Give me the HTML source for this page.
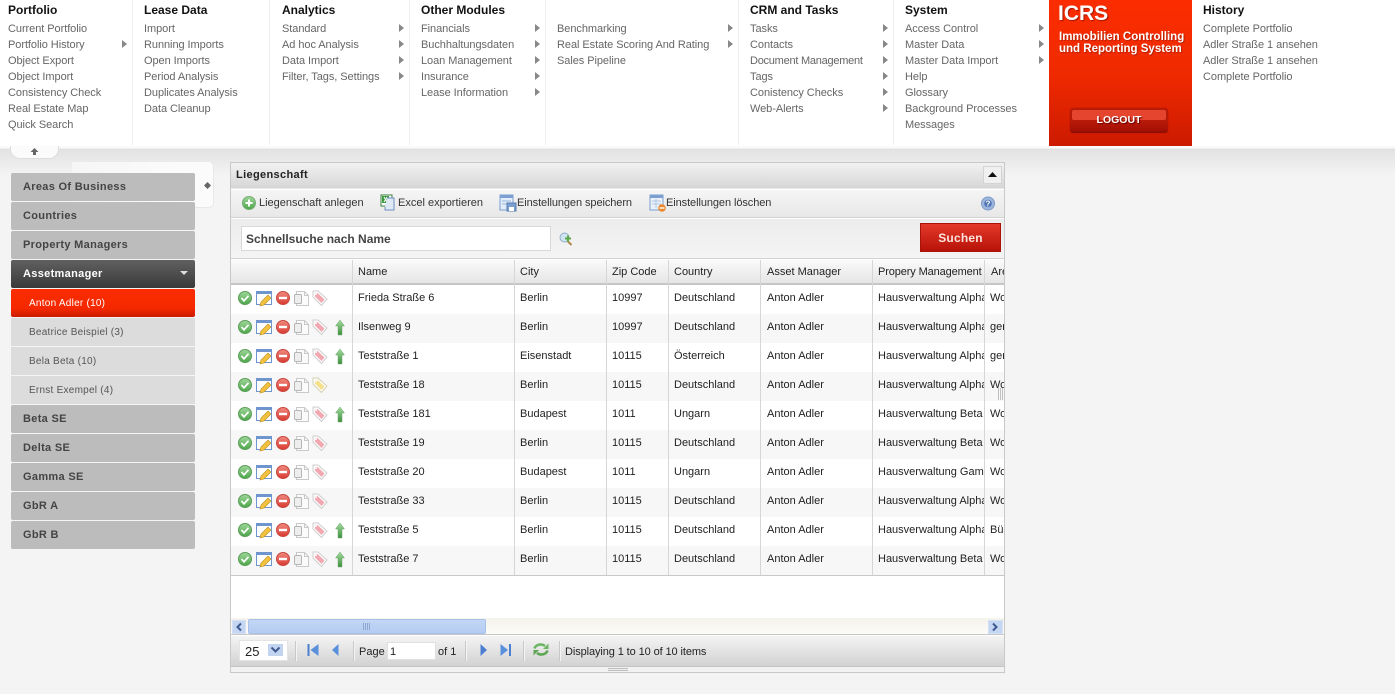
<!DOCTYPE html>
<html><head><meta charset="utf-8"><title>ICRS</title>
<style>
html,body{margin:0;padding:0;width:1395px;height:694px;overflow:hidden;background:#f4f4f4;font-family:"Liberation Sans",Arial,sans-serif;font-size:11px;color:#222}
div,span{box-sizing:border-box}
.a{position:absolute}
.t{position:absolute;white-space:nowrap;line-height:16px;margin-top:1px}
#menu{position:absolute;left:0;top:0;width:1395px;height:146px;background:#fff}
.v{position:absolute;top:0;width:1px;height:145px;background:#eee}
.h{position:absolute;top:2px;font-weight:bold;font-size:12px;line-height:16px;color:#111;white-space:nowrap}
.m{position:absolute;font-size:11px;line-height:16px;color:#666;white-space:nowrap;margin-top:1px;letter-spacing:-.06px}
.ar{position:absolute;width:0;height:0;border-left:5px solid #888;border-top:4px solid transparent;border-bottom:4px solid transparent}
.n{position:absolute;left:11px;width:184px;height:28px;border-radius:2px;font-weight:bold;font-size:11px;letter-spacing:.32px;line-height:28px;padding-left:12px;color:#444;background:#bcbcbc}
.n.s{font-weight:normal;font-size:10px;letter-spacing:.25px;padding-left:18px;background:#dcdcdc;color:#555;line-height:30px;border-radius:0}
table{border-collapse:separate;border-spacing:0;table-layout:fixed;position:absolute;left:231px;width:773px}
td{box-sizing:border-box;height:29px;padding:5px 0 0 5px;font-weight:normal;text-align:left;overflow:hidden;white-space:nowrap;vertical-align:top;border-right:1px solid #d6d6d6;font-size:11px;line-height:16px;color:#222}
td:nth-child(6){padding-left:6px}
tr.e td{background:#f7f7f7}
tr.o td{background:#fff}
td:last-child{border-right:0}
.sep{position:absolute;width:1px;background:#c8c8c8;box-shadow:1px 0 0 #f4f4f4}
</style></head><body>
<svg width="0" height="0" style="position:absolute"><defs>
<linearGradient id="gg" x1="0" y1="0" x2="0" y2="1"><stop offset="0" stop-color="#9fd69a"/><stop offset="1" stop-color="#4ca64a"/></linearGradient>
<linearGradient id="rg" x1="0" y1="0" x2="0" y2="1"><stop offset="0" stop-color="#f08a80"/><stop offset="1" stop-color="#d83a30"/></linearGradient>
<linearGradient id="ug" x1="0" y1="0" x2="0" y2="1"><stop offset="0" stop-color="#a5dca0"/><stop offset="1" stop-color="#3d8f3d"/></linearGradient>
<g id="base">
<circle cx="245" cy="298" r="6.5" fill="url(#gg)" stroke="#5a9e58"/>
<path d="M241.5 298l2.5 2.8 4.5-5" fill="none" stroke="#fff" stroke-width="1.7"/>
<rect x="256.5" y="291.5" width="15" height="13" fill="#fff" stroke="#6f95cf"/>
<rect x="256" y="291" width="16" height="3" fill="#6f95cf"/>
<path d="M260 306l1-4 7-7 3 3-7 7z" fill="#f2c23e" stroke="#b98a1e" stroke-width=".6"/>
<circle cx="283" cy="298" r="6.5" fill="url(#rg)" stroke="#c9473e"/>
<rect x="279" y="296.8" width="8" height="2.4" fill="#fff"/>
<path d="M296.5 291.5h8l4 4v10h-12z" fill="#fbfbfb" stroke="#c9c9c9"/>
<rect x="294.5" y="294.5" width="7" height="9" rx="1" fill="#eee" stroke="#b5b5b5"/>
<path d="M304.500 291.500v4h4" fill="none" stroke="#c9c9c9"/>
</g>
<g id="tp"><path d="M313 291h5l9 8-5.500 6.500-8.500-8.500z" fill="#fbfbfb" stroke="#cfcfcf"/><path d="M315 293h2.500l7 6.500-3 3.500-6.500-6.500z" fill="#f2a8b0"/><circle cx="316" cy="294" r="1" fill="#fff"/></g>
<g id="ty"><path d="M313 291h5l9 8-5.500 6.500-8.500-8.500z" fill="#fbfbfb" stroke="#d6d0b0"/><path d="M315 293h2.500l7 6.500-3 3.500-6.500-6.500z" fill="#f5e08a"/><circle cx="316" cy="294" r="1" fill="#fff"/></g>
<path id="up" d="M340 291l4.500 6h-2.500v9h-4v-9h-2.500z" fill="url(#ug)" stroke="#6aa86a" stroke-width=".5"/>
</defs></svg>

<div class="a" style="left:0;top:146px;width:1395px;height:32px;background:linear-gradient(#fafafa 0,#fafafa 2px,#e2e2e2 3px,#f4f4f4 30px)"></div>

<div id="menu">
<div class="v" style="left:132px"></div><div class="v" style="left:269px"></div><div class="v" style="left:409px"></div><div class="v" style="left:545px"></div><div class="v" style="left:738px"></div><div class="v" style="left:893px"></div>
<div class="h" style="left:8px">Portfolio</div>
<div class="m" style="left:8px;top:20px">Current Portfolio</div>
<div class="m" style="left:8px;top:36px">Portfolio History</div><div class="ar" style="left:122px;top:40px"></div>
<div class="m" style="left:8px;top:52px">Object Export</div>
<div class="m" style="left:8px;top:68px">Object Import</div>
<div class="m" style="left:8px;top:84px">Consistency Check</div>
<div class="m" style="left:8px;top:100px">Real Estate Map</div>
<div class="m" style="left:8px;top:116px">Quick Search</div>
<div class="h" style="left:144px">Lease Data</div>
<div class="m" style="left:144px;top:20px">Import</div>
<div class="m" style="left:144px;top:36px">Running Imports</div>
<div class="m" style="left:144px;top:52px">Open Imports</div>
<div class="m" style="left:144px;top:68px">Period Analysis</div>
<div class="m" style="left:144px;top:84px">Duplicates Analysis</div>
<div class="m" style="left:144px;top:100px">Data Cleanup</div>
<div class="h" style="left:282px">Analytics</div>
<div class="m" style="left:282px;top:20px">Standard</div><div class="ar" style="left:399px;top:24px"></div>
<div class="m" style="left:282px;top:36px">Ad hoc Analysis</div><div class="ar" style="left:399px;top:40px"></div>
<div class="m" style="left:282px;top:52px">Data Import</div><div class="ar" style="left:399px;top:56px"></div>
<div class="m" style="left:282px;top:68px">Filter, Tags, Settings</div><div class="ar" style="left:399px;top:72px"></div>
<div class="h" style="left:421px">Other Modules</div>
<div class="m" style="left:421px;top:20px">Financials</div><div class="ar" style="left:535px;top:24px"></div>
<div class="m" style="left:421px;top:36px">Buchhaltungsdaten</div><div class="ar" style="left:535px;top:40px"></div>
<div class="m" style="left:421px;top:52px">Loan Management</div><div class="ar" style="left:535px;top:56px"></div>
<div class="m" style="left:421px;top:68px">Insurance</div><div class="ar" style="left:535px;top:72px"></div>
<div class="m" style="left:421px;top:84px">Lease Information</div><div class="ar" style="left:535px;top:88px"></div>
<div class="m" style="left:557px;top:20px">Benchmarking</div><div class="ar" style="left:728px;top:24px"></div>
<div class="m" style="left:557px;top:36px">Real Estate Scoring And Rating</div><div class="ar" style="left:728px;top:40px"></div>
<div class="m" style="left:557px;top:52px">Sales Pipeline</div>
<div class="h" style="left:750px">CRM and Tasks</div>
<div class="m" style="left:750px;top:20px">Tasks</div><div class="ar" style="left:883px;top:24px"></div>
<div class="m" style="left:750px;top:36px">Contacts</div><div class="ar" style="left:883px;top:40px"></div>
<div class="m" style="left:750px;top:52px;letter-spacing:-.25px">Document Management</div><div class="ar" style="left:883px;top:56px"></div>
<div class="m" style="left:750px;top:68px">Tags</div><div class="ar" style="left:883px;top:72px"></div>
<div class="m" style="left:750px;top:84px">Conistency Checks</div><div class="ar" style="left:883px;top:88px"></div>
<div class="m" style="left:750px;top:100px">Web-Alerts</div><div class="ar" style="left:883px;top:104px"></div>
<div class="h" style="left:905px">System</div>
<div class="m" style="left:905px;top:20px">Access Control</div><div class="ar" style="left:1039px;top:24px"></div>
<div class="m" style="left:905px;top:36px">Master Data</div><div class="ar" style="left:1039px;top:40px"></div>
<div class="m" style="left:905px;top:52px">Master Data Import</div><div class="ar" style="left:1039px;top:56px"></div>
<div class="m" style="left:905px;top:68px">Help</div>
<div class="m" style="left:905px;top:84px">Glossary</div>
<div class="m" style="left:905px;top:100px">Background Processes</div>
<div class="m" style="left:905px;top:116px">Messages</div>
<div class="h" style="left:1203px">History</div>
<div class="m" style="left:1203px;top:20px">Complete Portfolio</div>
<div class="m" style="left:1203px;top:36px">Adler Straße 1 ansehen</div>
<div class="m" style="left:1203px;top:52px">Adler Straße 1 ansehen</div>
<div class="m" style="left:1203px;top:68px">Complete Portfolio</div>
<div class="a" style="left:1049px;top:0;width:143px;height:146px;background:linear-gradient(#fb2d00 0,#f02a00 50%,#cc1a00 100%)">
<div class="t" style="left:9px;top:1px;font-weight:bold;font-size:21px;line-height:24px;color:#fff;text-shadow:1px 1px 1px #a01800">ICRS</div>
<div class="t" style="left:10px;top:30px;font-weight:bold;font-size:11.5px;line-height:12px;color:#fff;text-shadow:1px 1px 1px #b02000">Immobilien Controlling<br>und Reporting System</div>
<div class="a" style="left:21px;top:108px;width:98px;height:25px;border-radius:3px;background:linear-gradient(#b81a08,#b81a08 50%,#a81206 85%,#8c0e04);box-shadow:0 0 1px #a01000"></div>
<div class="a" style="left:23px;top:110px;width:94px;height:10px;border-radius:2px;background:#e5452f"></div>
<div class="t" style="left:21px;top:111px;width:98px;text-align:center;font-weight:bold;font-size:10.5px;color:#fff;text-shadow:1px 1px 1px #600">LOGOUT</div>
</div>
</div>

<div class="a" style="left:10px;top:146px;width:49px;height:13px;background:#fbfbfb;border:1px solid #ddd;border-top:0;border-radius:0 0 10px 10px"></div>
<svg class="a" style="left:29px;top:147px" width="11" height="9"><path d="M5.500 1l4 4h-2.500v3h-3v-3h-2.500z" fill="#666"/></svg>

<div class="a" style="left:72px;top:162px;width:142px;height:46px;background:linear-gradient(90deg,#f6f6f6,#fbfbfb 80%);border-right:1px solid #e8e8e8;border-bottom:1px solid #e8e8e8;border-radius:0 5px 5px 0"></div>
<svg class="a" style="left:203px;top:181px" width="9" height="9"><path d="M4.500 1l3.500 3.500-3.500 3.500-3.500-3.500z" fill="#666"/></svg>

<div class="n" style="top:173px">Areas Of Business</div>
<div class="n" style="top:202px">Countries</div>
<div class="n" style="top:231px">Property Managers</div>
<div class="n" style="top:260px;color:#fff;background:linear-gradient(#606060,#3a3a3a)">Assetmanager</div>
<svg class="a" style="left:179px;top:270px" width="10" height="6"><path d="M1 1h8l-4 4z" fill="#ddd"/></svg>
<div class="n s" style="top:289px;background:linear-gradient(#fb2c00 0,#f52800 70%,#c81c00);color:#fff;border-radius:2px">Anton Adler (10)</div>
<div class="n s" style="top:318px">Beatrice Beispiel (3)</div>
<div class="n s" style="top:347px">Bela Beta (10)</div>
<div class="n s" style="top:376px">Ernst Exempel (4)</div>
<div class="n" style="top:405px">Beta SE</div>
<div class="n" style="top:434px">Delta SE</div>
<div class="n" style="top:463px">Gamma SE</div>
<div class="n" style="top:492px">GbR A</div>
<div class="n" style="top:521px">GbR B</div>

<!-- Panel -->
<div class="a" style="left:230px;top:162px;width:775px;height:511px;border:1px solid #c8c8c8;background:#fff"></div>
<div class="a" style="left:231px;top:163px;width:773px;height:26px;background:linear-gradient(#f2f2f2,#d6d6d6);border-bottom:1px solid #e8e8e8"></div>
<div class="t" style="left:236px;top:166px;font-weight:bold;font-size:11px;letter-spacing:.35px;color:#222">Liegenschaft</div>
<div class="a" style="left:983px;top:166px;width:19px;height:18px;background:#f0f0f0;border:1px solid #d4d4d4"></div>
<svg class="a" style="left:987px;top:171px" width="11" height="7"><path d="M1 6l4.500-5 4.500 5z" fill="#111"/></svg>

<div class="a" style="left:231px;top:190px;width:773px;height:28px;background:linear-gradient(#f5f5f5,#e8e8e8);border-bottom:1px solid #d2d2d2"></div>
<svg class="a" style="left:231px;top:190px" width="773" height="28">
<circle cx="18" cy="13" r="6.500" fill="url(#gg)" stroke="#78ad76"/><path d="M14.500 13h7M18 9.500v7" stroke="#fff" stroke-width="2"/>
<rect x="150" y="5" width="11" height="11" fill="#fff" stroke="#39803c"/><rect x="151" y="6" width="7" height="7" fill="#3a9a3e"/><path d="M153 7l3 5M156 7l-3 5" stroke="#fff"/><path d="M156 8h7v12h-9v-3" fill="#dfe8f5" stroke="#6f8fc0"/>
<rect x="269" y="5" width="13" height="15" fill="#e3edf9" stroke="#7a9fd0"/><rect x="269" y="5" width="13" height="3" fill="#7a9fd0"/><path d="M271 11h9M271 14h5" stroke="#9ab5da"/><rect x="276" y="13" width="9" height="8" fill="#7a9fd0" stroke="#567cb0"/><rect x="278" y="17" width="5" height="4" fill="#fff"/>
<rect x="419" y="5" width="13" height="15" fill="#eaf1fa" stroke="#7a9fd0"/><rect x="419" y="5" width="13" height="3" fill="#7a9fd0"/><path d="M421 11h9M421 14h9M425 9v9" stroke="#b0c6e2"/><circle cx="431" cy="18" r="3.800" fill="#e8892e"/><rect x="428.500" y="17.300" width="5" height="1.400" fill="#fff"/>
<circle cx="757" cy="13.500" r="6.500" fill="#9db6dc" stroke="#7d9cc9"/><circle cx="757" cy="13.500" r="3.800" fill="#4f74b5"/><text x="757" y="16.500" font-size="8" font-weight="bold" fill="#fff" text-anchor="middle" font-family="Liberation Sans">?</text>
</svg>
<div class="t" style="left:259px;top:194px;color:#333">Liegenschaft anlegen</div>
<div class="t" style="left:398px;top:194px;color:#333">Excel exportieren</div>
<div class="t" style="left:517px;top:194px;color:#333;letter-spacing:-.08px">Einstellungen speichern</div>
<div class="t" style="left:666px;top:194px;color:#333;letter-spacing:-.08px">Einstellungen löschen</div>

<div class="a" style="left:231px;top:219px;width:773px;height:40px;background:linear-gradient(#ececec,#f4f4f4);border-bottom:1px solid #d2d2d2"></div>
<div class="a" style="left:241px;top:226px;width:310px;height:25px;background:#fff;border:1px solid #d8d8d8"></div>
<div class="t" style="left:246px;top:230px;font-weight:bold;font-size:12px;color:#444">Schnellsuche nach Name</div>
<svg class="a" style="left:558px;top:231px" width="16" height="16"><circle cx="6.500" cy="6.500" r="4.500" fill="#cfe3f2" stroke="#8fb0c8"/><path d="M9.500 10l4 4" stroke="#b08a50" stroke-width="2"/><path d="M7 7.500h6M10 4.500v6" stroke="#5aa84a" stroke-width="2"/></svg>
<div class="a" style="left:920px;top:223px;width:81px;height:29px;background:linear-gradient(#e2392a,#b81208);border:1px solid #a81408"></div>
<div class="t" style="left:920px;top:229px;width:81px;text-align:center;font-weight:bold;font-size:12px;letter-spacing:.2px;color:#fbe4de">Suchen</div>

<!-- Header -->
<div class="a" style="left:231px;top:260px;width:773px;height:25px;background:linear-gradient(#fafafa,#e6e6e6);border-bottom:2px solid #c6c6c6"></div>
<div class="a" style="left:352px;top:260px;width:1px;height:25px;background:#d6d6d6"></div>
<div class="a" style="left:514px;top:260px;width:1px;height:25px;background:#d6d6d6"></div>
<div class="a" style="left:606px;top:260px;width:1px;height:25px;background:#d6d6d6"></div>
<div class="a" style="left:668px;top:260px;width:1px;height:25px;background:#d6d6d6"></div>
<div class="a" style="left:760px;top:260px;width:1px;height:25px;background:#d6d6d6"></div>
<div class="a" style="left:872px;top:260px;width:1px;height:25px;background:#d6d6d6"></div>
<div class="a" style="left:984px;top:260px;width:1px;height:25px;background:#d6d6d6"></div>
<div class="t" style="left:358px;top:263px">Name</div>
<div class="t" style="left:520px;top:263px">City</div>
<div class="t" style="left:612px;top:263px">Zip Code</div>
<div class="t" style="left:674px;top:263px">Country</div>
<div class="t" style="left:767px;top:263px">Asset Manager</div>
<div class="t" style="left:878px;top:263px;letter-spacing:-.12px">Propery Management</div>
<div class="a" style="left:985px;top:260px;width:19px;height:23px;overflow:hidden"><div class="t" style="left:6px;top:3px">Area</div></div>

<table style="top:285px">
<colgroup><col style="width:122px"><col style="width:162px"><col style="width:92px"><col style="width:62px"><col style="width:92px"><col style="width:112px"><col style="width:112px"><col style="width:19px"></colgroup>
<tr class="o"><td></td><td>Frieda Straße 6</td><td>Berlin</td><td>10997</td><td>Deutschland</td><td>Anton Adler</td><td>Hausverwaltung Alpha</td><td>Wohnen</td></tr>
<tr class="e"><td></td><td>Ilsenweg 9</td><td>Berlin</td><td>10997</td><td>Deutschland</td><td>Anton Adler</td><td>Hausverwaltung Alpha</td><td>gemischt</td></tr>
<tr class="o"><td></td><td>Teststraße 1</td><td>Eisenstadt</td><td>10115</td><td>Österreich</td><td>Anton Adler</td><td>Hausverwaltung Alpha</td><td>gemischt</td></tr>
<tr class="e"><td></td><td>Teststraße 18</td><td>Berlin</td><td>10115</td><td>Deutschland</td><td>Anton Adler</td><td>Hausverwaltung Alpha</td><td>Wohnen</td></tr>
<tr class="o"><td></td><td>Teststraße 181</td><td>Budapest</td><td>1011</td><td>Ungarn</td><td>Anton Adler</td><td>Hausverwaltung Beta</td><td>Wohnen</td></tr>
<tr class="e"><td></td><td>Teststraße 19</td><td>Berlin</td><td>10115</td><td>Deutschland</td><td>Anton Adler</td><td>Hausverwaltung Beta</td><td>Wohnen</td></tr>
<tr class="o"><td></td><td>Teststraße 20</td><td>Budapest</td><td>1011</td><td>Ungarn</td><td>Anton Adler</td><td>Hausverwaltung Gamma</td><td>Wohnen</td></tr>
<tr class="e"><td></td><td>Teststraße 33</td><td>Berlin</td><td>10115</td><td>Deutschland</td><td>Anton Adler</td><td>Hausverwaltung Alpha</td><td>Wohnen</td></tr>
<tr class="o"><td></td><td>Teststraße 5</td><td>Berlin</td><td>10115</td><td>Deutschland</td><td>Anton Adler</td><td>Hausverwaltung Alpha</td><td>Büro</td></tr>
<tr class="e"><td></td><td>Teststraße 7</td><td>Berlin</td><td>10115</td><td>Deutschland</td><td>Anton Adler</td><td>Hausverwaltung Beta</td><td>Wohnen</td></tr>
</table>
<div class="a" style="left:231px;top:575px;width:773px;height:1px;background:#c8c8c8"></div>
<svg class="a" style="left:0;top:0;pointer-events:none" width="1395" height="694">
<use href="#base"/><use href="#tp"/>
<use href="#base" y="29"/><use href="#tp" y="29"/><use href="#up" y="29"/>
<use href="#base" y="58"/><use href="#tp" y="58"/><use href="#up" y="58"/>
<use href="#base" y="87"/><use href="#ty" y="87"/>
<use href="#base" y="116"/><use href="#tp" y="116"/><use href="#up" y="116"/>
<use href="#base" y="145"/><use href="#tp" y="145"/>
<use href="#base" y="174"/><use href="#tp" y="174"/>
<use href="#base" y="203"/><use href="#tp" y="203"/>
<use href="#base" y="232"/><use href="#tp" y="232"/><use href="#up" y="232"/>
<use href="#base" y="261"/><use href="#tp" y="261"/><use href="#up" y="261"/>
<path d="M998.500 388v12M1000.500 388v12M1002.500 388v12" stroke="#c0c0c0"/>
</svg>

<!-- Scrollbar -->
<div class="a" style="left:231px;top:618px;width:773px;height:17px;background:linear-gradient(#f5f2ec,#fcfbf7);border-bottom:1px solid #c6c6c6"></div>
<div class="a" style="left:232px;top:620px;width:14px;height:14px;background:#c5d6f3;border:1px solid #d4e0f5"></div>
<svg class="a" style="left:234px;top:622px" width="10" height="10"><path d="M7 1.500l-3.500 3.500 3.500 3.500" fill="none" stroke="#3e5a90" stroke-width="2"/></svg>
<div class="a" style="left:248px;top:619px;width:238px;height:15px;background:linear-gradient(#c3d6f5,#b4ccf2);border:1px solid #a9c1e8;border-radius:2px"></div>
<svg class="a" style="left:363px;top:623px" width="9" height="7"><path d="M.5 0v7M2.500 0v7M4.500 0v7M6.500 0v7" stroke="#8ea8d0"/></svg>
<div class="a" style="left:988px;top:620px;width:15px;height:14px;background:#c5d6f3;border:1px solid #d4e0f5"></div>
<svg class="a" style="left:990px;top:622px" width="10" height="10"><path d="M3 1.500l3.500 3.500-3.500 3.500" fill="none" stroke="#3e5a90" stroke-width="2"/></svg>

<!-- Paging -->
<div class="a" style="left:231px;top:636px;width:773px;height:31px;background:linear-gradient(#f4f4f4,#d2d2d2);border-bottom:1px solid #c4c4c4"></div>
<div class="a" style="left:231px;top:667px;width:773px;height:5px;background:#f2f2f2"></div>
<div class="a" style="left:608px;top:668px;width:20px;height:3px;border-top:1px solid #bbb;border-bottom:1px solid #bbb"></div>
<div class="a" style="left:239px;top:640px;width:49px;height:21px;background:#fff;border:1px solid #e4e4e4"></div>
<div class="t" style="left:245px;top:643px;font-size:13px;color:#222">25</div>
<div class="a" style="left:268px;top:644px;width:15px;height:12px;background:#c3d4f0"></div>
<svg class="a" style="left:270px;top:646px" width="11" height="8"><path d="M1.500 1.500l4 4 4-4" fill="none" stroke="#3e5a90" stroke-width="2"/></svg>
<div class="sep" style="left:295px;top:641px;height:20px"></div>
<div class="sep" style="left:353px;top:641px;height:20px"></div>
<div class="sep" style="left:465px;top:641px;height:20px"></div>
<div class="sep" style="left:523px;top:641px;height:20px"></div>
<div class="sep" style="left:559px;top:641px;height:20px"></div>
<svg class="a" style="left:300px;top:640px" width="220" height="20">
<rect x="7.500" y="4" width="2" height="12" fill="#4c7fd0"/><path d="M18.500 4v12l-8-6z" fill="#5a8fdc"/>
<path d="M38.500 4v12l-6.500-6z" fill="#5a8fdc"/>
<path d="M180.500 4v12l6.500-6z" fill="#4c7fd0"/>
<path d="M200.500 4v12l7.500-6z" fill="#5a8fdc"/><rect x="209" y="4" width="2" height="12" fill="#4c7fd0"/>
</svg>
<svg class="a" style="left:532px;top:641px" width="18" height="17"><path d="M2.500 7.500C4 3 10 2.500 13 5" fill="none" stroke="#6cb563" stroke-width="2.500"/><path d="M16.500 2.500v5.500h-5.500z" fill="#6cb563"/><path d="M15.500 9.500C14 14 8 14.500 5 12" fill="none" stroke="#5ca653" stroke-width="2.500"/><path d="M1.500 14.500v-5.500h5.500z" fill="#5ca653"/></svg>
<div class="t" style="left:359px;top:643px;color:#222">Page</div>
<div class="a" style="left:387px;top:642px;width:49px;height:18px;background:#fff;border:1px solid #e0e0e0"></div>
<div class="t" style="left:390px;top:643px;color:#222">1</div>
<div class="t" style="left:438px;top:643px;color:#222">of 1</div>
<div class="t" style="left:565px;top:643px;color:#222;letter-spacing:-.1px">Displaying 1 to 10 of 10 items</div>
</body></html>
